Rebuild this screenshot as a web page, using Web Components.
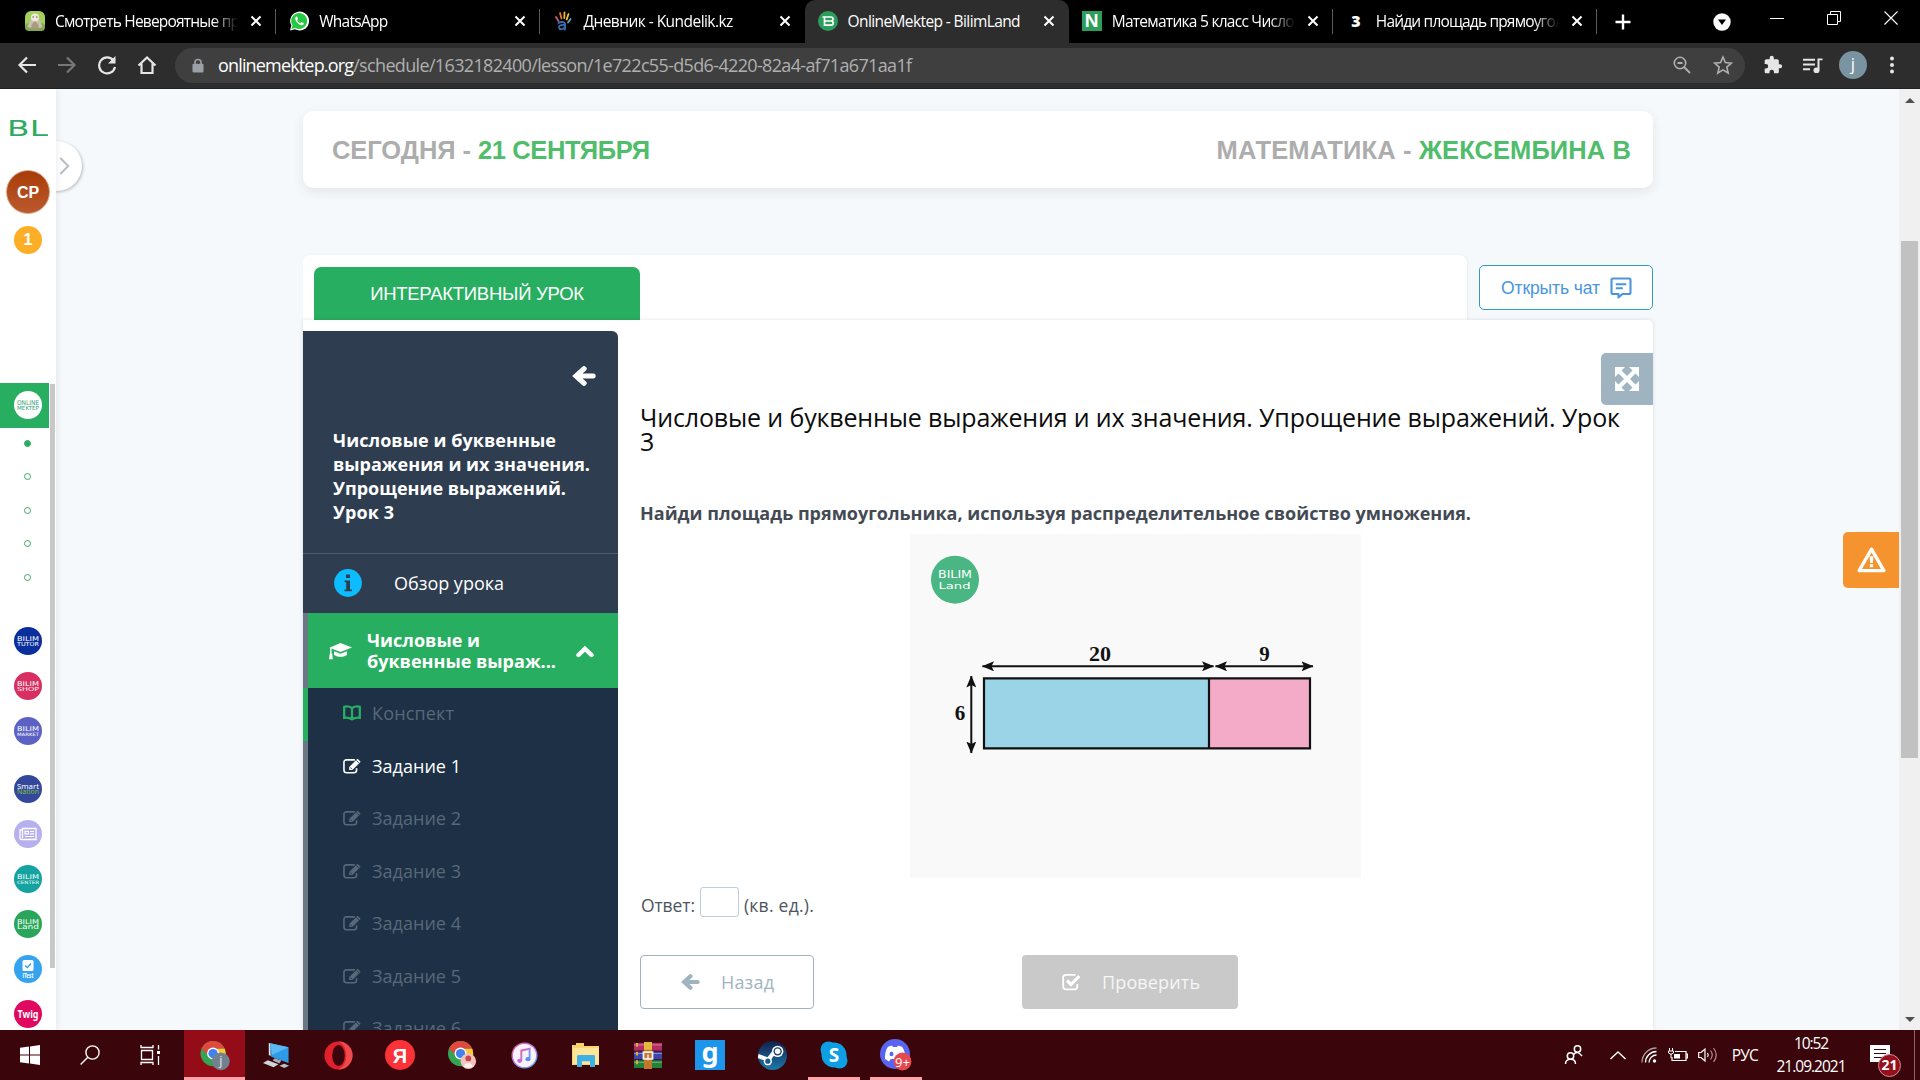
<!DOCTYPE html>
<html lang="ru">
<head>
<meta charset="utf-8">
<title>OnlineMektep - BilimLand</title>
<style>
  html, body { margin: 0; padding: 0; }
  body {
    width: 1920px;
    height: 1080px;
    overflow: hidden;
    font-family: "Open Sans", "Noto Sans", sans-serif;
    --green: #28ae60;
    --pageBg: #f6f9fc;
    --sideTop: #2e3d4f;
    --sideList: #1d3046;
    --steel: #9fb4c0;
  }
</style>
</head>
<body>
<app-desktop></app-desktop>

<script>
const icons = {
  /* browser */
  back: ['0 0 20 20', '<path d="M19 10H3M10 2.5L2.500 10L10 17.500" fill="none" stroke="currentColor" stroke-width="2.200"/>'],
  forward: ['0 0 20 20', '<path d="M1 10H17M10 2.500L17.500 10L10 17.500" fill="none" stroke="currentColor" stroke-width="2.200"/>'],
  reload: ['0 0 20 20', '<path d="M16.500 5.500A8 8 0 1 0 18 12" fill="none" stroke="currentColor" stroke-width="2.200"/><path d="M18.500 1V8.500H11z" fill="currentColor"/>'],
  home: ['0 0 20 20', '<path d="M1.500 10.500L10 2.500L18.500 10.500M4.500 8.500V18H15.500V8.500" fill="none" stroke="currentColor" stroke-width="2.200"/>'],
  lock: ['0 0 12 16', '<path d="M3 7V4.500a3 3 0 0 1 6 0V7" fill="none" stroke="currentColor" stroke-width="1.600"/><rect x=".5" y="6" width="11" height="9.500" rx="1.200" fill="currentColor"/>'],
  zoom: ['0 0 18 18', '<circle cx="7" cy="7" r="5.700" fill="none" stroke="currentColor" stroke-width="1.600"/><path d="M4.500 7h5M11 11l6 6" stroke="currentColor" stroke-width="1.800"/>'],
  star: ['0 0 20 20', '<path d="M10 2l2.400 5.600 6 .5-4.600 4 1.400 5.900L10 14.900 4.800 18l1.400-5.900-4.600-4 6-.5z" fill="none" stroke="currentColor" stroke-width="1.600"/>'],
  puzzle: ['0 0 24 24', '<path fill="currentColor" d="M20.500 11H19V7c0-1.100-.9-2-2-2h-4V3.500a2.500 2.500 0 0 0-5 0V5H4c-1.100 0-2 .9-2 2v3.800h1.500a2.700 2.700 0 0 1 0 5.400H2V20c0 1.100.9 2 2 2h3.800v-1.500a2.700 2.700 0 0 1 5.400 0V22H17c1.100 0 2-.9 2-2v-4h1.500a2.500 2.500 0 0 0 0-5z"/>'],
  queue: ['0 0 20 18', '<path d="M0 3h12M0 8h12M0 13h7" stroke="currentColor" stroke-width="2.200"/><path d="M19.500 2.500H15.500V13.500" fill="none" stroke="currentColor" stroke-width="2"/><circle cx="13.500" cy="14" r="3" fill="currentColor"/>'],
  dots: ['0 0 4 18', '<g fill="currentColor"><circle cx="2" cy="2.500" r="2"/><circle cx="2" cy="9" r="2"/><circle cx="2" cy="15.500" r="2"/></g>'],
  close: ['0 0 12 12', '<path d="M1.500 1.500l9 9M10.500 1.500l-9 9" stroke="currentColor" stroke-width="2"/>'],
  plus: ['0 0 16 16', '<path d="M8 .5v15M.5 8h15" stroke="currentColor" stroke-width="2.400"/>'],
  drop: ['0 0 18 18', '<circle cx="9" cy="9" r="8.700" fill="#fff"/><path d="M5 6.500h8L9 12z" fill="#000"/>'],
  minimize: ['0 0 14 14', '<path d="M0 7.500h14" stroke="#fff"/>'],
  restore: ['0 0 14 14', '<path d="M.5 3.500h10v10h-10zM3.500 3V.5h10v10H11" fill="none" stroke="#fff"/>'],
  winclose: ['0 0 14 14', '<path d="M.5 .5l13 13M13.500 .5l-13 13" stroke="#fff" stroke-width="1.100"/>'],
  /* favicons */
  movie: ['0 0 20 20', '<rect width="20" height="20" rx="6" fill="#a3d05c"/><rect y="12" width="20" height="8" rx="4" fill="#7fa94a"/><path d="M2.500 16c.5-4 3-5 4-9s6-4 7 0 3.500 5 4 9q-7.500 4-15 0z" fill="#c9c0ad"/><circle cx="10" cy="6.500" r="4" fill="#efe9dd"/><path d="M6 18q0-5 4-8 4 3 4 8z" fill="#a99a80"/><path d="M7.500 6h1.500M11 6h1.500" stroke="#655"/>'],
  whatsapp: ['0 0 20 20', '<path d="M1 19.500l1.300-4.900A9.500 9.500 0 1 1 6 18.300z" fill="#fff"/><path d="M2.500 18l1-3.600A8 8 0 1 1 6.400 17z" fill="#25c943"/><path d="M7.200 5.500c-1.500 1-1.400 3 .3 5.200s4 3.700 5.600 3.500 2-1.500 1.700-2l-2.200-1.100-1.200 1.200c-1.600-.7-2.600-1.700-3.300-3.100l1-1.100-.9-2.300z" fill="#fff"/>'],
  kundelik: ['0 0 20 20', '<g fill="none" stroke-linecap="round" stroke-width="1.800"><path d="M3 6L5.500 10" stroke="#c65b7b"/><path d="M7 2L8.500 7.500" stroke="#e8792d"/><path d="M11.500 1.500L11.300 7" stroke="#f0b32f"/><path d="M15.500 3l-1.800 5.500" stroke="#e9c731"/><path d="M17.500 8L15 11.500" stroke="#6aa3c9"/><path d="M5.500 12c2-1.500 6-1.300 6.500.5v6M12 14c-4-.5-6.500.5-6 2.800s5 2 6-1" stroke="#3c6db1"/></g>'],
  bilim: ['0 0 20 20', '<circle cx="10" cy="10" r="10" fill="#2c9e5c"/><path d="M4.500 6H13q2 0 2 2t-2 2H7M13 10q2.200 0 2.200 2t-2.200 2.200H6.500V6" fill="none" stroke="#fff" stroke-width="1.700"/>'],
  /* lesson */
  arrow: ['0 0 24 22', '<path d="M21 11H5M12 3L4 11L12 19" fill="none" stroke="currentColor" stroke-width="5.400" stroke-linecap="round" stroke-linejoin="miter"/>'],
  chat: ['0 0 22 22', '<path d="M3 1.500H19Q20.500 1.500 20.500 3V15.500Q20.500 17 19 17H12.500L8.500 20.500V17H3Q1.500 17 1.500 15.500V3Q1.500 1.500 3 1.500Z" fill="none" stroke="currentColor" stroke-width="2.100" stroke-linejoin="round"/><path d="M5.800 7.200h10.500M5.800 11.200h7" stroke="currentColor" stroke-width="2"/>'],
  expand: ['0 0 24 24', '<path d="M3 3L21 21M21 3L3 21" stroke="#fff" stroke-width="4.200"/><path d="M0 0h10L0 10zM24 0v10L14 0zM0 24V14l10 10zM24 24H14l10-10z" fill="#fff"/>'],
  warn: ['0 0 30 27', '<path d="M15 2.200L27.800 24.500H2.200z" fill="none" stroke="#fff" stroke-width="3.400" stroke-linejoin="round"/><path d="M13 9.500h4l-.6 7h-2.800zM13.300 18h3.400v3h-3.400z" fill="#fff"/>'],
  info: ['0 0 28 28', '<circle cx="14" cy="14" r="13.900" fill="#0cbcff"/><path d="M12 5.500h4v3.600h-4zM10.500 11.500H16V20.500h1.800v1.800h-7.300v-1.800h1.700v-7.200h-1.700z" fill="#2e3d4f"/>'],
  cap: ['0 0 24 17', '<path d="M12.500 0L24 4.500L12.500 9L1.500 4.800z" fill="#fff"/><path d="M6 8.200l6.500 2.500L19 8.200V12q-6.500 4-13 0z" fill="#fff"/><path d="M2.800 5v6.500" stroke="#fff" stroke-width="1.400"/><path d="M1.800 10.500h2.400l.6 5.700H1z" fill="#fff"/>'],
  chevron: ['0 0 18 13', '<path d="M2.500 10L9 3.700L15.500 10" fill="none" stroke="#fff" stroke-width="4.400" stroke-linecap="round"/>'],
  book: ['0 0 18 16', '<path d="M9 3Q5 .6 1.200 1.800V12.800Q5.500 12 9 14.300Q12.500 12 16.800 12.800V1.800Q13 .6 9 3zV14" fill="none" stroke="#28ae60" stroke-width="2.300"/>'],
  edit: ['0 0 20 17', '<path d="M12.500 2H3.800Q1 2 1 4.800V12.800Q1 15.700 3.800 15.700H11.500Q14.300 15.700 14.300 12.800V11" fill="none" stroke="currentColor" stroke-width="1.700"/><path d="M6.500 9.500L15.300 .8L18.600 4L9.900 12.800H6.500z" fill="currentColor"/><path d="M14 2.500l2.900 2.900M7.700 10l1.800 1.900" stroke="var(--cut, #1d3046)" stroke-width=".9"/>'],
  check: ['0 0 20 18', '<path d="M13.500 1.800H4Q1.200 1.800 1.200 4.600V13.500Q1.200 16.300 4 16.300H12.500Q15.300 16.300 15.300 13.500V11" fill="none" stroke="#fff" stroke-width="1.800"/><path d="M5 7.500L9 11.500L17.300 3" fill="none" stroke="#fff" stroke-width="3.200"/>'],
  toggle: ['0 0 12 18', '<path d="M1.500 1L10 9L1.500 17" fill="none" stroke="#b4bfc8" stroke-width="2.200"/>'],
  news: ['0 0 28 28', '<circle cx="14" cy="14" r="14" fill="#b7b0ee"/><path d="M8.500 8.500H22V19.500H7.500Q6 19.500 6 18V10H8.500zV18" fill="none" stroke="#fff" stroke-width="1.300"/><path d="M11 11.300h3.500v2.500H11zM16 11.500h4M16 13.800h4M11 16.500h9" fill="none" stroke="#fff" stroke-width="1.200"/>'],
  /* taskbar */
  windows: ['0 0 20 20', '<path d="M0 2.800L9 1.600V9.500H0zM10 1.400L20 0V9.500H10zM0 10.500H9V18.400L0 17.200zM10 10.500H20V20L10 18.600z" fill="#fff"/>'],
  search: ['0 0 20 20', '<circle cx="12.500" cy="7.500" r="6.600" fill="none" stroke="#fff" stroke-width="1.400"/><path d="M7.800 12.300L.6 19.500" stroke="#fff" stroke-width="1.400"/>'],
  taskview: ['0 0 21 20', '<path d="M1.500 5.500h11v9h-11zM1 0v2.500h12V0M1 20v-2.500h12V20M18.500 0v4.500M18.500 11v9" fill="none" stroke="#fff" stroke-width="1.300"/><path d="M17 6h3v3h-3z" fill="#fff"/>'],
  chromej: ['0 0 32 32', '<circle cx="13.500" cy="14" r="13" fill="#35a352"/><path d="M1.500 9A13 13 0 0 1 25.500 9H13.500L8 15z" fill="#dd4b3e"/><path d="M25.500 9A13 13 0 0 1 14 27L19 17L18 9z" fill="#fcc934"/><circle cx="13.500" cy="14" r="6.200" fill="#fff"/><circle cx="13.500" cy="14" r="4.800" fill="#4282ef"/><circle cx="21.500" cy="22" r="9.200" fill="#72818e"/><text x="21.500" y="26" font-size="13" fill="#e5eaee" text-anchor="middle" font-family="Open Sans">j</text>'],
  computer: ['0 0 30 30', '<path d="M7 2L9 3V16L7 15z" fill="#d9e3ea"/><path d="M8.500 2.500L27.500 6.800V23.500L9.500 16.800z" fill="#2d9be8"/><path d="M8.500 2.500L27.500 6.800L10.500 15z" fill="#5cb8f2"/><path d="M13 18.500l7 2.500-2 3-7-3z" fill="#a4b0b8"/><path d="M1 23.500L6 20.500L17 25L12 28z" fill="#cfd5d9"/><path d="M18 26.500l5-2 5 2-5 2.500z" fill="#b8c1c7"/>'],
  opera: ['0 0 30 30', '<ellipse cx="15" cy="15" rx="14.500" ry="14.500" fill="#e2202c"/><path d="M15 .5a14.500 14.500 0 0 1 0 29q8-4 8-14.500T15 .5" fill="#f04a4c"/><ellipse cx="15" cy="15" rx="6.500" ry="10.800" fill="#3b060b"/>'],
  yandex: ['0 0 30 30', '<circle cx="15" cy="15" r="15" fill="#fb3237"/><text x="15" y="22.500" font-size="20" font-weight="bold" fill="#fff" text-anchor="middle" font-family="Liberation Sans">Я</text>'],
  chromep: ['0 0 32 32', '<circle cx="14" cy="14" r="13" fill="#35a352"/><path d="M2 9A13 13 0 0 1 26 9H14L8.500 15z" fill="#dd4b3e"/><path d="M26 9A13 13 0 0 1 15 27L20 17L18 9z" fill="#fcc934"/><circle cx="14" cy="14" r="6.200" fill="#fff"/><circle cx="14" cy="14" r="4.800" fill="#4282ef"/><circle cx="22" cy="22" r="8" fill="#f2c2bd"/><circle cx="22" cy="19" r="3" fill="#c94747"/><path d="M17 27q5-7 10 0-5 4-10 0" fill="#fff0ec"/>'],
  itunes: ['0 0 28 28', '<defs><linearGradient id="it" x1="0" y1="0" x2="1" y2="1"><stop stop-color="#ed5f9a"/><stop offset=".5" stop-color="#b07be8"/><stop offset="1" stop-color="#48b6f0"/></linearGradient></defs><circle cx="14" cy="14" r="13.500" fill="url(#it)"/><circle cx="14" cy="14" r="12" fill="#f8f3fa"/><path d="M10.700 19V8.800L19.300 7V17" fill="none" stroke="url(#it)" stroke-width="2"/><ellipse cx="9" cy="19.500" rx="2.600" ry="2.200" fill="#c86bd8"/><ellipse cx="17.600" cy="17.800" rx="2.600" ry="2.200" fill="#5c8ff0"/>'],
  explorer: ['0 0 28 26', '<path d="M0 2h4V0h8v3h15V23H0z" fill="#f6d36b"/><path d="M1 5h26V22H1z" fill="#fde59a"/><path d="M5 25V14q0-1.500 1.500-1.500h15Q23 12.500 23 14V25H18V19H10v6z" fill="#3fb0e3"/>'],
  winrar: ['0 0 30 28', '<path d="M1 1h28v8H1z" fill="#b52c63"/><path d="M1 10h28v8H1z" fill="#3b48a8"/><path d="M1 19h28v8H1z" fill="#23823a"/><path d="M1 3h28M1 12h28M1 21h28" stroke="#ffffff66"/><path d="M4 1v26" stroke="#d8b13d" stroke-width="2" stroke-dasharray="4 5"/><path d="M11 0h8v28h-8z" fill="#c2772b"/><path d="M11 0h8v8h-8z" fill="#e3b93b"/><path d="M10.500 10.500h9v7h-9z" fill="none" stroke="#eee" stroke-width="1.800"/><path d="M15 13v6" stroke="#eee" stroke-width="1.500"/>'],
  gbox: ['0 0 30 30', '<path d="M0 0h30v30H0z" fill="#1c95ea"/><text x="15" y="21.500" font-size="27" font-weight="bold" fill="#fff" text-anchor="middle" font-family="Noto Sans">g</text>'],
  steam: ['0 0 28 28', '<defs><linearGradient id="st" x1="0" y1="0" x2="0" y2="1"><stop stop-color="#13214c"/><stop offset="1" stop-color="#1b79ab"/></linearGradient></defs><circle cx="14" cy="14" r="14" fill="url(#st)"/><path d="M0 14.500L10 18L17 9" fill="none" stroke="#fff" stroke-width="4"/><circle cx="19" cy="10" r="5.500" fill="#fff"/><circle cx="19" cy="10" r="4" fill="#1a3d6b"/><circle cx="19" cy="10" r="2.700" fill="#fff"/><circle cx="9.500" cy="19.500" r="4" fill="#fff"/><circle cx="9.500" cy="19.500" r="2.500" fill="#1b5c8e"/>'],
  skype: ['0 0 28 28', '<g fill="#0d9fe3"><circle cx="14" cy="14" r="12.500"/><circle cx="8.500" cy="8.500" r="8"/><circle cx="19.500" cy="19.500" r="8"/></g><text x="14" y="20.500" font-size="19" font-weight="bold" fill="#fff" text-anchor="middle" font-family="Noto Sans">S</text>'],
  discord: ['0 0 32 32', '<circle cx="15" cy="15" r="15" fill="#5865f2"/><path d="M5 20c-.3-5 .8-9 3-12.300l4-1.200 1 1.500h4l1-1.500 4 1.200C24.500 11 25.500 15 25 20l-4 2.500-1.700-2.500h-8.600L9 22.500z" fill="#fff"/><ellipse cx="11.500" cy="15" rx="2" ry="2.300" fill="#5865f2"/><circle cx="22.500" cy="22.500" r="9" fill="#e5484f"/><text x="22.500" y="27.500" font-size="13" fill="#fff" text-anchor="middle" font-family="Open Sans">9+</text>'],
  people: ['0 0 20 20', '<g fill="none" stroke="#fff" stroke-width="1.500"><circle cx="13.500" cy="4" r="3.200"/><path d="M9.500 9.500q4-4.500 8.500 1.500"/><circle cx="6.500" cy="11" r="3.200"/><path d="M1.500 19q0-4.500 5-4.700t5 4.700"/></g>'],
  up: ['0 0 16 9', '<path d="M.5 8L8 1L15.500 8" fill="none" stroke="#fff" stroke-width="1.400"/>'],
  wifi: ['0 0 16 16', '<g fill="none" stroke="#fff" stroke-width="1.300"><path d="M1 15.500A14.500 14.500 0 0 1 15.500 1" opacity=".6"/><path d="M4.500 15.500a11 11 0 0 1 11-11M8 15.500A7.500 7.500 0 0 1 15.500 8"/></g><circle cx="13.500" cy="14" r="1.700" fill="#fff"/>'],
  battery: ['0 0 20 14', '<path d="M7 3.500h11v9H4V9M18.500 6h1v4h-1" fill="none" stroke="#fff" stroke-width="1.200"/><path d="M6 6h6v4.500H6z" fill="#fff"/><path d="M1.500 0v3M4.500 0v3M.5 3h5v2q-2.500 2.500-5 0zM3 6v4" stroke="#fff" fill="none"/>'],
  sound: ['0 0 20 16', '<path d="M.7 5.500H3L7 2V14L3 10.500H.7z" fill="none" stroke="#fff" stroke-width="1.200"/><path d="M9.500 6q1.500 2 0 4" stroke="#fff" fill="none" stroke-width="1.200"/><path d="M12.500 3.500q3.500 4.500 0 9M15.500 1q5.500 7 0 14" stroke="#b98b8f" fill="none" stroke-width="1.200"/>'],
  note: ['0 0 20 20', '<path d="M0 0h20v17h-8l-3 3v-3H0z" fill="#fff"/><path d="M4 4.500h12M4 8.500h12M4 12.500h8" stroke="#3b060b" stroke-width="1.200"/>'],
};

class UiIcon extends HTMLElement {
  constructor() {
    super();
    this.attachShadow({ mode: 'open' });
  }

  connectedCallback() {
    const [box, body] = icons[this.getAttribute('name')];
    const w = this.getAttribute('w');
    const h = this.getAttribute('h') || w;
    this.shadowRoot.innerHTML = `
      <style>
        :host { display: inline-flex; flex: none; width: ${w}px; height: ${h}px; }
        svg { display: block; }
      </style>
      <svg width="${w}" height="${h}" viewBox="${box}" preserveAspectRatio="none">${body}</svg>
    `;
  }
}

// one line of text, tracked so that it takes exactly w pixels
class FitText extends HTMLElement {
  static all = [];

  constructor() {
    super();
    this.attachShadow({ mode: 'open' });
    this.shadowRoot.innerHTML = `
      <style>:host { display: inline-block; white-space: nowrap; flex: none; }</style>
      <slot></slot>
    `;
    FitText.all.push(this);
  }

  fit() {
    const want = Number(this.getAttribute('w'));
    const count = this.textContent.length - 1;
    const natural = this.getBoundingClientRect().width;
    if (want && count > 0) {
      this.style.letterSpacing = `${(want - natural) / count}px`;
    }
  }
}

class BrowserTab extends HTMLElement {
  constructor() {
    super();
    this.attachShadow({ mode: 'open' });
  }

  connectedCallback() {
    const active = this.hasAttribute('active');
    this.shadowRoot.innerHTML = `
      <style>
        :host {
          display: flex;
          box-sizing: border-box;
          width: 264.200px;
          height: 43px;
          padding: 0 0 1px 13px;
          align-items: center;
          color: #fff;
          font: 15.500px "Open Sans", sans-serif;
          border-radius: 10px 10px 0 0;
          background: ${active ? '#2d2d2d' : 'transparent'};
        }
        .title {
          width: 184px;
          margin: -1px 12px 0 10px;
          overflow: hidden;
          line-height: 26px;
          -webkit-mask-image: linear-gradient(90deg, #000 86%, transparent);
        }
        .whole { -webkit-mask-image: none; }
        .line { width: 1px; height: 25px; margin-left: 13px; background: ${this.hasAttribute('line') ? '#5b5b5b' : 'transparent'}; }
      </style>
      <slot name="icon"></slot>
      <div class="title ${active ? 'whole' : ''}"><slot></slot></div>
      <ui-icon name="close" w="12"></ui-icon>
      <div class="line"></div>
    `;
  }
}

class BrowserChrome extends HTMLElement {
  constructor() {
    super();
    this.attachShadow({ mode: 'open' });
    this.shadowRoot.innerHTML = `
      <style>
        :host { display: block; height: 89px; background: #2d2d2d; }
        .tabs { display: flex; height: 43px; padding-left: 12px; background: #000; align-items: center; color: #fff; }
        .nletter { width: 20px; height: 20px; background: #2c9e5c; color: #fff; font: bold 19px/20px "Liberation Sans", sans-serif; text-align: center; }
        .three { width: 20px; font: 900 16px/20px "Noto Sans", sans-serif; text-align: center; color: #fff; }
        .plus { margin: 0 82px 0 18px; }
        .win { display: flex; gap: 43px; margin: -7px 0 0 39px; }
        .bar { display: flex; height: 44px; align-items: center; color: #e6e6e6; padding: 0 0 1px 17px; border-bottom: 1px solid #202124; }
        .nav { display: flex; gap: 20px; width: 158px; }
        .url {
          display: flex; box-sizing: border-box; width: 1570px; height: 35px; padding: 0 12px 0 17px;
          border-radius: 18px; background: #3f3f3f; align-items: center;
          font: 18px/28px "Open Sans", sans-serif; color: #b0b0b0;
        }
        .host { color: #fff; }
        .url ui-icon[name=lock] { margin-right: 14px; color: #9aa0a6; }
        .url ui-icon[name=zoom] { margin: 0 22px 0 auto; }
        .right { display: flex; align-items: center; margin-left: 18px; gap: 20px; }
        .avatar { width: 28px; height: 28px; margin: 0 3px 0 -4px; border-radius: 50%; background: #7993a1; color: #fff; text-align: center; font: 17px/26px "Open Sans", sans-serif; }
      </style>
      <div class="tabs">
        <browser-tab line><ui-icon slot="icon" name="movie" w="20"></ui-icon><fit-text w="194">Смотреть Невероятные при</fit-text></browser-tab>
        <browser-tab line><ui-icon slot="icon" name="whatsapp" w="20"></ui-icon><fit-text w="69">WhatsApp</fit-text></browser-tab>
        <browser-tab><ui-icon slot="icon" name="kundelik" w="20"></ui-icon><fit-text w="150">Дневник - Kundelik.kz</fit-text></browser-tab>
        <browser-tab active><ui-icon slot="icon" name="bilim" w="20"></ui-icon><fit-text w="173">OnlineMektep - BilimLand</fit-text></browser-tab>
        <browser-tab line><div slot="icon" class="nletter">N</div><fit-text w="183">Математика 5 класс Число</fit-text></browser-tab>
        <browser-tab line><div slot="icon" class="three">3</div><fit-text w="188">Найди площадь прямоугол</fit-text></browser-tab>
        <ui-icon class="plus" name="plus" w="16"></ui-icon>
        <ui-icon name="drop" w="18"></ui-icon>
        <div class="win">
          <ui-icon name="minimize" w="14"></ui-icon>
          <ui-icon name="restore" w="14"></ui-icon>
          <ui-icon name="winclose" w="14"></ui-icon>
        </div>
      </div>
      <div class="bar">
        <div class="nav">
          <ui-icon name="back" w="20"></ui-icon>
          <ui-icon name="forward" w="20" style="color: #777"></ui-icon>
          <ui-icon name="reload" w="20"></ui-icon>
          <ui-icon name="home" w="20"></ui-icon>
        </div>
        <div class="url">
          <ui-icon name="lock" w="12" h="15"></ui-icon>
          <fit-text class="host" w="136">onlinemektep.org</fit-text>
          <fit-text w="559">/schedule/1632182400/lesson/1e722c55-d5d6-4220-82a4-af71a671aa1f</fit-text>
          <ui-icon name="zoom" w="18"></ui-icon>
          <ui-icon name="star" w="20"></ui-icon>
        </div>
        <div class="right">
          <ui-icon name="puzzle" w="20"></ui-icon>
          <ui-icon name="queue" w="20" h="17"></ui-icon>
          <div class="avatar">j</div>
          <ui-icon name="dots" w="4" h="18"></ui-icon>
        </div>
      </div>
    `;
  }
}

// round partner logo of the left rail, two short lines of lettering
class RailLogo extends HTMLElement {
  constructor() {
    super();
    this.attachShadow({ mode: 'open' });
  }

  connectedCallback() {
    const a = (name, other) => this.getAttribute(name) || other;
    const [one, two] = a('label', '').split('|');
    const color = a('color', '#fff');
    this.shadowRoot.innerHTML = `
      <style>
        :host { display: flex; width: 28px; height: 28px; }
        text { font-family: "${a('face', 'DejaVu Sans')}", sans-serif; }
      </style>
      <svg width="28" height="28" viewBox="0 0 28 28">
        <circle cx="14" cy="14" r="14" fill="${a('bg')}"/>
        ${two ? `
          <text x="3" y="13.500" font-size="6.500" fill="${color}" textLength="22" lengthAdjust="spacingAndGlyphs">${one}</text>
          <text x="3" y="19" font-size="${a('size', '5.500')}" fill="${a('color2', color)}" textLength="22" lengthAdjust="spacingAndGlyphs">${two}</text>
        ` : `
          ${this.hasAttribute('test') ? '<rect x="8.500" y="5" width="11" height="11" rx="1.500" fill="#fff"/><path d="M11 10.500l2.300 2L17 8.500" fill="none" stroke="#35a3ee" stroke-width="1.500"/>' : ''}
          <text x="14" y="${a('y', '18')}" font-size="${a('size')}" text-anchor="middle" fill="#fff" font-weight="bold" textLength="${a('len', '20')}" lengthAdjust="spacingAndGlyphs">${one}</text>
        `}
      </svg>
    `;
  }
}

class SideRail extends HTMLElement {
  constructor() {
    super();
    this.attachShadow({ mode: 'open' });
    this.shadowRoot.innerHTML = `
      <style>
        :host { display: block; position: relative; z-index: 2; width: 56px; height: 941px; flex: none; }
        .rail { display: flex; flex-direction: column; position: relative; height: 100%; background: #fff; box-shadow: 2px 0 6px #0000000f; }
        .bl { display: block; margin: 30px 0 0 8px; }
        .user { box-sizing: border-box; width: 44px; height: 44px; margin: 32px 0 0 6px; border-radius: 50%; border: 1px solid #dba58b; background: linear-gradient(#a83c08, #bb5a2e); color: #fff; text-align: center; font: bold 16px/43px "Liberation Sans", sans-serif; }
        .count { width: 28px; height: 28px; margin: 12px 0 0 14px; border-radius: 50%; background: #fdae27; color: #fff; text-align: center; font: bold 16px/28px "Liberation Sans", sans-serif; }
        .toggle { position: absolute; left: 32px; top: 52px; box-sizing: border-box; width: 50px; height: 50px; padding: 16px 0 0 27px; border-radius: 50%; background: #fff; box-shadow: 1px 1px 3px #00000040; }
        .scroll { display: grid; grid-template-columns: 50px 5px; margin-top: 129px; height: 648px; overflow: hidden; }
        .current { display: flex; width: 49px; height: 45px; align-items: center; padding-left: 14px; box-sizing: border-box; background: var(--green); }
        .dots { margin-top: -1.500px; }
        .dots div { display: flex; height: 33.500px; width: 55px; align-items: center; justify-content: center; }
        .dots i { box-sizing: border-box; width: 7px; height: 7px; border: 1.500px solid #3aaa68; border-radius: 50%; }
        .dots div:first-child i { background: var(--green); }
        .group { display: flex; flex-direction: column; gap: 17px; padding: 33px 0 0 14px; }
        .group + .group { padding-top: 30px; }
        .thumb { height: 584px; margin-top: 1px; background: #c8c8c8; }
      </style>
      <div class="toggle"><ui-icon name="toggle" w="11" h="18"></ui-icon></div>
      <div class="rail">
        <svg class="bl" width="40" height="19" viewBox="0 0 40 19">
          <text x="-1" y="17" font-family="DejaVu Sans" font-size="20.500" fill="#2fab61" textLength="41" lengthAdjust="spacingAndGlyphs">BL</text>
        </svg>
        <div class="user">СР</div>
        <div class="count">1</div>
        <div class="scroll">
          <div>
            <div class="current"><rail-logo bg="#fff" color="#2c9e70" label="ONLINE|MEKTEP"></rail-logo></div>
            <div class="dots"><div><i></i></div><div><i></i></div><div><i></i></div><div><i></i></div><div><i></i></div></div>
            <div class="group">
              <rail-logo bg="#0a2f9c" label="BILIM|TUTOR"></rail-logo>
              <rail-logo bg="#d92e61" label="BILIM|SHOP"></rail-logo>
              <rail-logo bg="#5c62c4" label="BILIM|MARKET" size="4.500"></rail-logo>
            </div>
            <div class="group">
              <rail-logo bg="#34489b" label="Smart|Nation" color2="#7cc142" size="7" face="Noto Sans"></rail-logo>
              <ui-icon name="news" w="28"></ui-icon>
              <rail-logo bg="#14a3a0" label="BILIM|CENTER" size="4.500"></rail-logo>
              <rail-logo bg="#2aa65a" label="BILIM|Land" size="7"></rail-logo>
              <rail-logo bg="#35a3ee" label="iTest" test y="22.500" size="6.500" len="11" face="Noto Sans"></rail-logo>
              <rail-logo bg="#e0095f" label="Twig" size="10" y="17.500" len="21" face="Noto Sans"></rail-logo>
            </div>
          </div>
          <div class="thumb"></div>
        </div>
      </div>
    `;
  }
}

class DayHeader extends HTMLElement {
  constructor() {
    super();
    this.attachShadow({ mode: 'open' });
    this.shadowRoot.innerHTML = `
      <style>
        :host {
          display: flex; justify-content: space-between; box-sizing: border-box; height: 77px; margin-top: 22px;
          padding: 0 22px 0 29px; border-radius: 10px; background: #fff; box-shadow: 0 4px 12px #00000014;
          font: bold 25.500px/78px "Liberation Sans", sans-serif; color: #adadad;
        }
        b { color: #50bd6b; }
      </style>
      <div><fit-text w="139">СЕГОДНЯ -</fit-text> <b><fit-text w="172">21 СЕНТЯБРЯ</fit-text></b></div>
      <div><fit-text w="195">МАТЕМАТИКА -</fit-text> <b><fit-text w="212">ЖЕКСЕМБИНА В</fit-text></b></div>
    `;
  }
}

class LessonTabs extends HTMLElement {
  constructor() {
    super();
    this.attachShadow({ mode: 'open' });
    this.shadowRoot.innerHTML = `
      <style>
        :host { display: flex; height: 65px; margin-top: 67px; font-family: "Liberation Sans", sans-serif; }
        .bar { display: flex; align-items: flex-end; box-sizing: border-box; width: 1164px; padding-left: 11px; border-radius: 8px 8px 0 0; background: #fff; box-shadow: 1px 0 3px #0000000d; }
        .tab { width: 326px; height: 53px; border-radius: 7px 7px 0 0; background: var(--green); color: #fff; text-align: center; font-size: 18.500px; line-height: 54px; }
        .chat { display: flex; align-items: center; box-sizing: border-box; width: 174px; height: 45px; margin: 10px 0 0 12px; padding-left: 21px; gap: 10px; border: 1px solid #319bc0; border-radius: 5px; background: #fff; color: #4a95dd; font-size: 17.500px; }
        .chat fit-text { margin-top: 2px; }
      </style>
      <div class="bar"><div class="tab"><fit-text w="214">ИНТЕРАКТИВНЫЙ УРОК</fit-text></div></div>
      <div class="chat"><fit-text w="99">Открыть чат</fit-text><ui-icon name="chat" w="22"></ui-icon></div>
    `;
  }
}

class LessonSidebar extends HTMLElement {
  constructor() {
    super();
    this.attachShadow({ mode: 'open' });
    this.tasks = [1, 2, 3, 4, 5, 6];
    this.shadowRoot.innerHTML = `
      <style>
        :host { display: block; width: 315px; height: 699px; margin-top: 11px; flex: none; overflow: hidden; border-radius: 0 6px 0 0; background: var(--sideTop); color: #fff; font-size: 18px; }
        .head { display: flex; flex-direction: column; box-sizing: border-box; height: 223px; padding: 35px 22px 0 30px; border-bottom: 1px solid #4b5a6a; font-weight: bold; line-height: 24px; }
        .head ui-icon { align-self: flex-end; margin-bottom: 42px; }
        .head fit-text { align-self: flex-start; }
        .overview { display: flex; align-items: center; box-sizing: border-box; height: 59px; padding: 0 0 1px 31px; gap: 32px; }
        .open { display: flex; align-items: center; box-sizing: border-box; height: 75px; padding: 1px 0 0 20px; border-left: 5px solid #6b7785; background: var(--green); font-weight: bold; line-height: 21.500px; }
        .open div { display: flex; flex-direction: column; width: 209px; margin-left: 15px; align-items: flex-start; }
        .item { display: flex; align-items: center; box-sizing: border-box; height: 52.500px; padding: 0 0 2px 35px; border-left: 5px solid #6b7785; background: var(--sideList); color: #596878; gap: 10px; }
        .item.notes { border-color: var(--green); }
        .item.notes fit-text { margin-left: 1px; }
        .item.current { color: #fff; }
      </style>
      <div class="head">
        <ui-icon name="arrow" w="24" h="20"></ui-icon>
        <fit-text w="223">Числовые и буквенные</fit-text>
        <fit-text w="257">выражения и их значения.</fit-text>
        <fit-text w="233">Упрощение выражений.</fit-text>
        <fit-text w="61">Урок 3</fit-text>
      </div>
      <div class="overview"><ui-icon name="info" w="28"></ui-icon><fit-text w="110">Обзор урока</fit-text></div>
      <div class="open">
        <ui-icon name="cap" w="24" h="17"></ui-icon>
        <div><fit-text w="113">Числовые и</fit-text><fit-text w="189">буквенные выраж...</fit-text></div>
        <ui-icon name="chevron" w="18" h="13"></ui-icon>
      </div>
      <div class="item notes"><ui-icon name="book" w="18" h="16"></ui-icon><fit-text w="82">Конспект</fit-text></div>
      ${this.tasks.map(n => `
        <div class="item ${n === 1 ? 'current' : ''}"><ui-icon name="edit" w="19" h="16"></ui-icon><fit-text w="89">Задание ${n}</fit-text></div>
      `).join('')}
    `;
  }
}

class RectangleFigure extends HTMLElement {
  constructor() {
    super();
    this.attachShadow({ mode: 'open' });
    this.shadowRoot.innerHTML = `
      <style>
        :host { display: block; width: 451px; height: 344px; background: #f9f9f9; }
        .num { font: bold 21px "Liberation Serif", serif; text-anchor: middle; fill: #111; }
        .logo { font-family: "DejaVu Sans", sans-serif; fill: #fff; }
      </style>
      <svg width="451" height="344" viewBox="0 0 451 344">
        <defs>
          <marker id="tip" markerUnits="userSpaceOnUse" markerWidth="12" markerHeight="10" refX="11.500" refY="5" orient="auto-start-reverse">
            <path d="M0 0L12 5L0 10L2.500 5z" fill="#111"/>
          </marker>
        </defs>
        <circle cx="45" cy="45.700" r="24" fill="#4ab683"/>
        <text class="logo" x="28" y="43.500" font-size="10" textLength="34" lengthAdjust="spacingAndGlyphs">BILIM</text>
        <text class="logo" x="28.500" y="55.300" font-size="9.500" textLength="32" lengthAdjust="spacingAndGlyphs">Land</text>
        <rect x="74" y="144.300" width="225" height="70" fill="#9bd4e6"/>
        <rect x="299" y="144.300" width="101" height="70" fill="#f4abc8"/>
        <path d="M74 144.300H400V214.300H74zM299 144.300V214.300" fill="none" stroke="#111" stroke-width="2.200"/>
        <g stroke="#111" stroke-width="2">
          <path d="M72.500 132.300H303.500" marker-start="url(#tip)" marker-end="url(#tip)"/>
          <path d="M305.500 132.300H403" marker-start="url(#tip)" marker-end="url(#tip)"/>
          <path d="M61.300 142V219" marker-start="url(#tip)" marker-end="url(#tip)"/>
        </g>
        <text class="num" x="190" y="127" textLength="22" lengthAdjust="spacingAndGlyphs">20</text>
        <text class="num" x="354.500" y="127">9</text>
        <text class="num" x="50" y="185.500">6</text>
      </svg>
    `;
  }
}

class LessonTask extends HTMLElement {
  constructor() {
    super();
    this.attachShadow({ mode: 'open' });
    this.shadowRoot.innerHTML = `
      <style>
        :host { display: flex; flex-direction: column; align-items: flex-start; position: relative; flex: 1; padding: 85px 0 0 22px; color: #4e5561; font-size: 17.500px; }
        .title { display: flex; flex-direction: column; align-items: flex-start; color: #0c0c0c; font: 25px/24px "Open Sans", sans-serif; }
        .question { margin-top: 48px; color: #434a54; font: bold 18px/24px "Open Sans", sans-serif; }
        rectangle-figure { margin: 9px 0 0 270px; }
        .answer { display: flex; height: 30px; margin: 9px 0 0 1px; line-height: 37px; }
        .input { box-sizing: border-box; width: 39px; height: 30px; margin: 0 5px 0 5px; border: 1px solid #bccfd9; border-radius: 3px; }
        .buttons { display: flex; gap: 208px; margin-top: 38px; }
        .button { display: flex; align-items: center; box-sizing: border-box; height: 54px; border-radius: 4px; gap: 20px; font-size: 18px; }
        .prev { width: 174px; padding-left: 40px; border: 1px solid var(--steel); color: var(--steel); }
        .prev ui-icon { margin-right: 1px; }
        .check { width: 216px; padding-left: 40px; background: #c9c9c9; color: #f6f6f6; }
        .full { display: flex; align-items: center; justify-content: center; position: absolute; right: 0; top: 33px; width: 52px; height: 52px; border-radius: 5px 0 0 5px; background: var(--steel); }
      </style>
      <div class="full"><ui-icon name="expand" w="24"></ui-icon></div>
      <div class="title">
        <fit-text w="980">Числовые и буквенные выражения и их значения. Упрощение выражений. Урок</fit-text>
        <span>3</span>
      </div>
      <fit-text class="question" w="831">Найди площадь прямоугольника, используя распределительное свойство умножения.</fit-text>
      <rectangle-figure></rectangle-figure>
      <div class="answer"><fit-text w="54">Ответ:</fit-text><div class="input"></div><fit-text w="70">(кв. ед.).</fit-text></div>
      <div class="buttons">
        <div class="button prev"><ui-icon name="arrow" w="19" h="16"></ui-icon><fit-text w="53">Назад</fit-text></div>
        <div class="button check"><ui-icon name="check" w="20" h="18"></ui-icon><fit-text w="98">Проверить</fit-text></div>
      </div>
    `;
  }
}

class PageScroll extends HTMLElement {
  constructor() {
    super();
    this.attachShadow({ mode: 'open' });
    this.shadowRoot.innerHTML = `
      <style>
        :host { display: flex; flex-direction: column; align-items: center; justify-content: space-between; box-sizing: border-box; width: 21px; height: 941px; padding: 9px 0 8px; background: #f0f0f0; flex: none; }
        .up { border: 5px solid transparent; border-top: 0; border-bottom: 5px solid #505050; }
        .down { border: 5px solid transparent; border-bottom: 0; border-top: 5px solid #505050; }
        .thumb { width: 17px; height: 517px; margin-bottom: 122px; background: #c1c1c1; }
      </style>
      <div class="up"></div><div class="thumb"></div><div class="down"></div>
    `;
  }
}

class TaskBar extends HTMLElement {
  constructor() {
    super();
    this.attachShadow({ mode: 'open' });
    this.apps = [
      ['chromej', 31, 31, 'active'], ['computer', 29, 28], ['opera', 29, 29], ['yandex', 30, 30],
      ['chromep', 31, 31], ['itunes', 27, 27], ['explorer', 28, 25], ['winrar', 30, 27],
      ['gbox', 30, 30], ['steam', 29, 29], ['skype', 28, 28, 'run'], ['discord', 32, 32, 'run'],
    ];
    this.shadowRoot.innerHTML = `
      <style>
        :host { display: flex; position: relative; z-index: 3; height: 50px; background: #3b060b; color: #fff; font: 15.500px "Open Sans", sans-serif; }
        .sys, .app { display: flex; align-items: center; justify-content: center; box-sizing: border-box; }
        .sys { width: 60px; }
        .sys + .app { margin-left: 4px; }
        .app { width: 62px; flex: none; }
        .app.active { width: 61px; padding-left: 1px; background: #930c18; box-shadow: inset 0 -3px #ffa3aa; }
        .app.run { width: 52px; margin: 0 5px; box-shadow: inset 0 -3px #ffa3aa; }
        .tray { display: flex; align-items: center; margin-left: auto; padding-right: 5px; }
        .clock { display: flex; flex-direction: column; width: 72px; margin: 0 23px 0 17px; align-items: center; line-height: 23px; }
        .notes { position: relative; height: 20px; margin: -1px 24px 0 0; }
        .badge { position: absolute; left: 8px; top: 9px; box-sizing: border-box; width: 23px; height: 23px; border: 1px solid #d98b92; border-radius: 50%; background: #94101d; text-align: center; font: bold 14px/20px "Open Sans", sans-serif; }
        .edge { align-self: stretch; width: 1px; background: #8b6669; }
      </style>
      <div class="sys"><ui-icon name="windows" w="20"></ui-icon></div>
      <div class="sys"><ui-icon name="search" w="20"></ui-icon></div>
      <div class="sys"><ui-icon name="taskview" w="21" h="20"></ui-icon></div>
      ${this.apps.map(([name, w, h, state]) => `
        <div class="app ${state || ''}"><ui-icon name="${name}" w="${w}" h="${h}"></ui-icon></div>
      `).join('')}
      <div class="tray">
        <ui-icon name="people" w="20" style="margin-right: 26px"></ui-icon>
        <ui-icon name="up" w="16" h="9" style="margin-right: 15px"></ui-icon>
        <ui-icon name="wifi" w="16" style="margin-right: 11px"></ui-icon>
        <ui-icon name="battery" w="20" h="14" style="margin-right: 10px"></ui-icon>
        <ui-icon name="sound" w="20" h="16" style="margin-right: 14px"></ui-icon>
        <fit-text w="27">РУС</fit-text>
        <div class="clock"><fit-text w="35">10:52</fit-text><fit-text w="70">21.09.2021</fit-text></div>
        <div class="notes"><ui-icon name="note" w="20"></ui-icon><div class="badge">21</div></div>
        <div class="edge"></div>
      </div>
    `;
  }
}

class AppDesktop extends HTMLElement {
  constructor() {
    super();
    this.attachShadow({ mode: 'open' });
    this.shadowRoot.innerHTML = `
      <style>
        :host { display: flex; flex-direction: column; width: 1920px; height: 1080px; overflow: hidden; }
        .page { display: flex; height: 941px; position: relative; overflow: hidden; background: var(--pageBg); }
        .content { flex: 1; padding-left: 247px; }
        .column { width: 1350px; }
        .panel { display: flex; position: relative; height: 710px; background: #fff; border-radius: 0 5px 0 0; box-shadow: 0 0 4px #0000001f; }
        .report { display: flex; align-items: center; justify-content: center; position: absolute; right: 21px; top: 443px; width: 56px; height: 56px; border-radius: 5px 0 0 5px; background: #f5942f; }
      </style>
      <browser-chrome></browser-chrome>
      <div class="page">
        <side-rail></side-rail>
        <div class="content">
          <div class="column">
            <day-header></day-header>
            <lesson-tabs></lesson-tabs>
            <div class="panel"><lesson-sidebar></lesson-sidebar><lesson-task></lesson-task></div>
          </div>
        </div>
        <page-scroll></page-scroll>
        <div class="report"><ui-icon name="warn" w="29" h="26"></ui-icon></div>
      </div>
      <task-bar></task-bar>
    `;
  }
}

customElements.define('ui-icon', UiIcon);
customElements.define('fit-text', FitText);
customElements.define('browser-tab', BrowserTab);
customElements.define('browser-chrome', BrowserChrome);
customElements.define('rail-logo', RailLogo);
customElements.define('side-rail', SideRail);
customElements.define('day-header', DayHeader);
customElements.define('lesson-tabs', LessonTabs);
customElements.define('lesson-sidebar', LessonSidebar);
customElements.define('rectangle-figure', RectangleFigure);
customElements.define('lesson-task', LessonTask);
customElements.define('page-scroll', PageScroll);
customElements.define('task-bar', TaskBar);
customElements.define('app-desktop', AppDesktop);

FitText.all.forEach((text) => text.fit());
</script>
</body>
</html>
